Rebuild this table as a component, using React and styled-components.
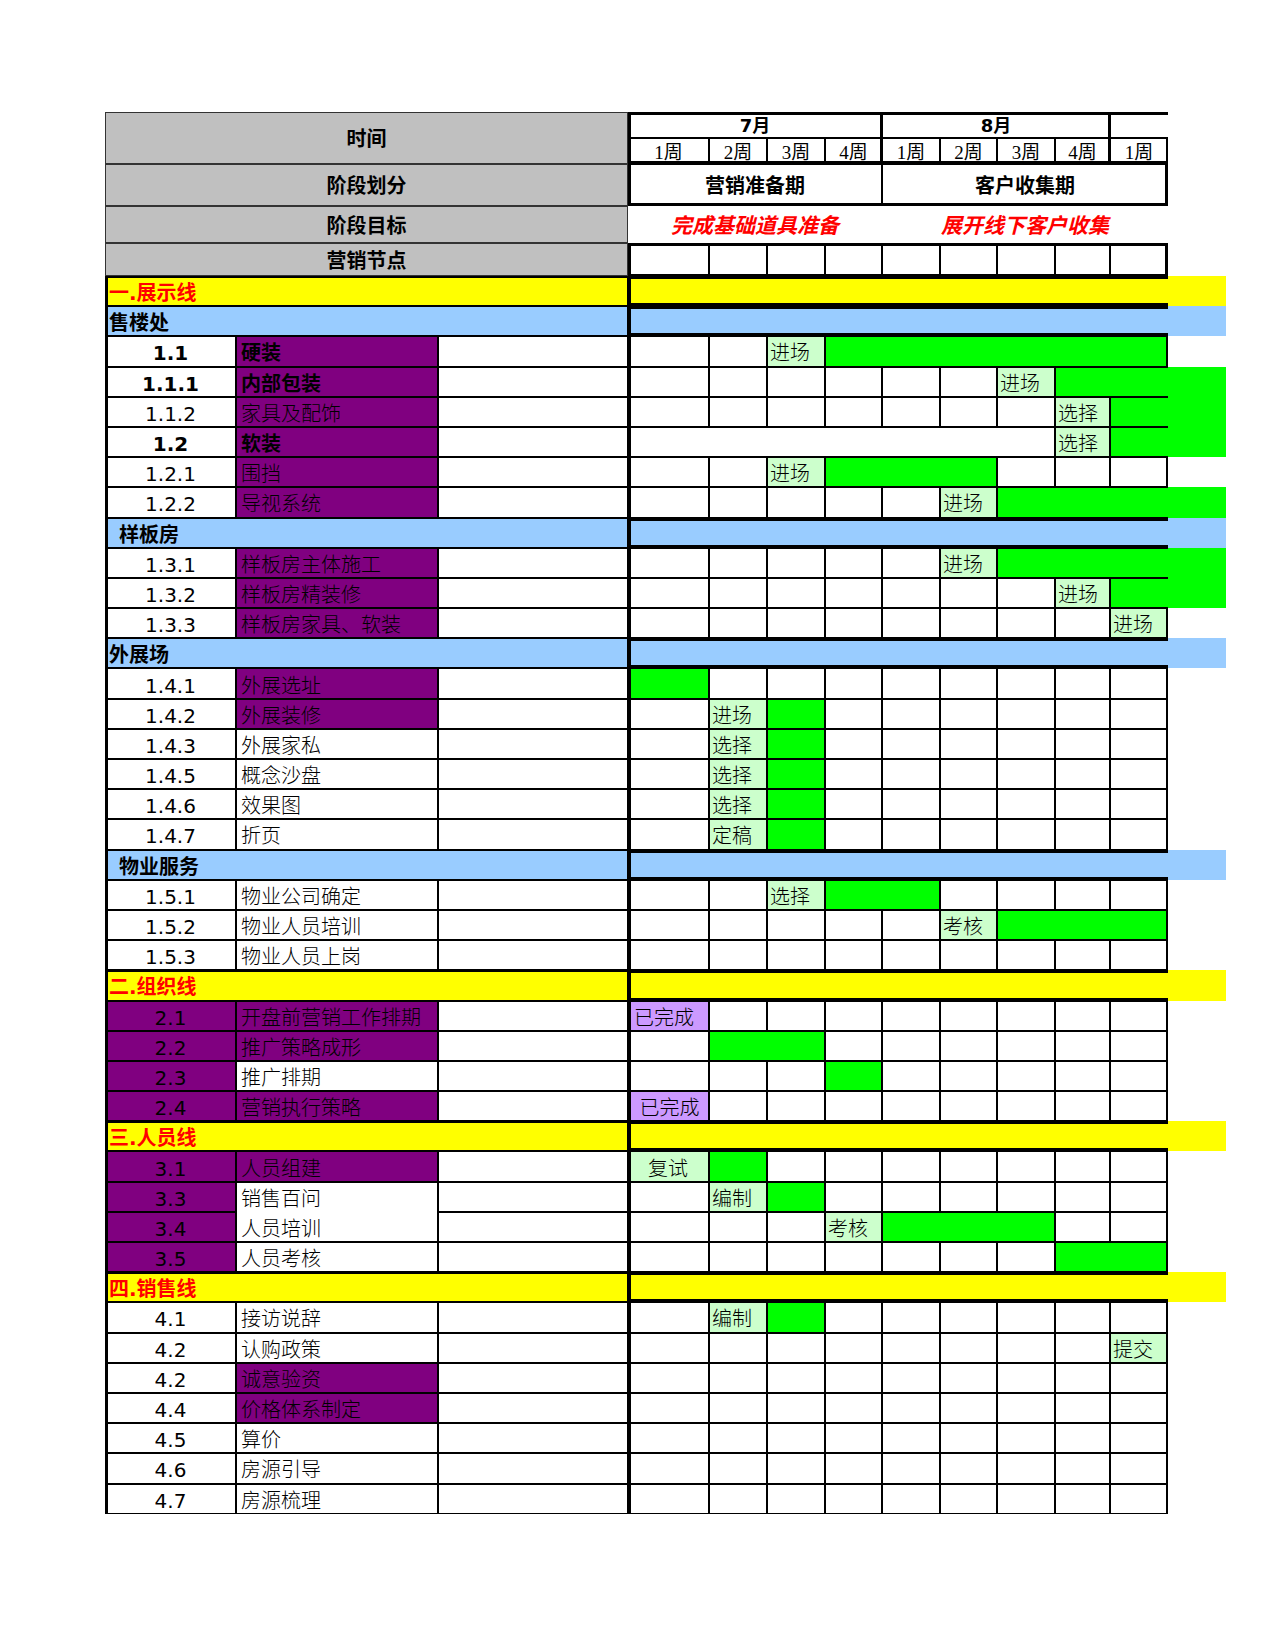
import React from 'react';
import styled, { createGlobalStyle } from 'styled-components';

const GlobalStyle = createGlobalStyle`
  body {
    margin: 0;
    background: #fff;
  }
`;

const COLS = '131px 202px 190px 81px 58px 58px 57px 58px 57px 58px 55px 58px 58px';
const SANS = `"DejaVu Sans", "Noto Sans CJK SC", sans-serif`;
const SERIF = `"Liberation Serif", "Noto Sans CJK SC", serif`;
const PURPLE = '#800080';

// draws the cell lines as inset shadows so neighbouring cells add up like sheet gridlines
const frame = ({ $l = 1, $t = 1, $r = 1, $b = 1, $c = '#000' }) => {
    const s = [];
    if ($l) s.push(`inset ${$l}px 0 0 ${$c}`);
    if ($r) s.push(`inset -${$r}px 0 0 ${$c}`);
    if ($t) s.push(`inset 0 ${$t}px 0 ${$c}`);
    if ($b) s.push(`inset 0 -${$b}px 0 ${$c}`);
    return s.length ? s.join(', ') : 'none';
};

const Sheet = styled.div`
    padding: 112px 0 120px 105px;
    font-family: ${SANS};
    color: #000;
`;

const HeadGrid = styled.div`
    display: grid;
    grid-template-columns: ${COLS};
    grid-template-rows: 26px 26px 42px 37px 33px;
`;

const Row = styled.div`
    display: grid;
    grid-template-columns: ${COLS};
    height: 30.2px;
`;

const Cell = styled.div`
    grid-column: span ${p => p.$span || 1};
    grid-row: span ${p => p.$rows || 1};
    display: flex;
    align-items: center;
    justify-content: ${p => p.$align || 'flex-start'};
    padding: 0 4px;
    background: ${p => p.$bg || '#fff'};
    box-shadow: ${frame};
    font-size: 20px;
    line-height: 1;
    white-space: nowrap;
    overflow: hidden;
    min-width: 0;
`;

const BodyCell = styled(Cell)`
    padding-top: 4px;
`;

const GrayHead = styled(Cell)`
    background: #c0c0c0;
    justify-content: center;
    font-weight: bold;
    padding-top: 2px;
`;

const MonthCell = styled(Cell)`
    justify-content: center;
    font-weight: bold;
    font-size: 18px;
    padding-top: 2px;
`;

const WeekLabel = styled(Cell)`
    justify-content: center;
    font-family: ${SERIF};
    font-size: 19px;
    padding: 3px 0 0;
`;

const PhaseCell = styled(Cell)`
    justify-content: center;
    font-weight: bold;
    padding-top: 2px;
`;

const GoalCell = styled(Cell)`
    justify-content: center;
    color: #ff0000;
    font-weight: bold;
    font-style: italic;
    font-size: 21px;
    padding-top: 4px;
`;

const NoCell = styled(BodyCell)`
    justify-content: center;
    font-weight: ${p => (p.$strong ? 700 : 400)};
`;

const NameCell = styled(BodyCell)`
    font-weight: ${p => (p.$strong ? 700 : 300)};
    padding-left: 5px;
`;

const NoteCell = styled(BodyCell)``;

const WeekCell = styled(BodyCell)``;

const TagCell = styled(BodyCell)`
    background: #ccffcc;
    font-weight: 300;
    padding-left: 3px;
`;

const DoneCell = styled(BodyCell)`
    background: #cc99ff;
    font-weight: 300;
    padding-left: 6px;
`;

const BarCell = styled(BodyCell)`
    background: #00ff00;
`;

const ExtCell = styled.div`
    background: ${p => p.$bg || 'transparent'};
`;

const BandCell = styled(BodyCell)`
    font-weight: bold;
    color: ${p => p.$ink || '#000'};
    padding-left: ${p => (p.$indent ? 14 : 4)}px;
`;

const rows = [
    { band: 'line', text: '一.展示线' },
    { band: 'group', text: '售楼处' },
    { no: '1.1', name: '硬装', strong: true, nameBg: PURPLE, chart: [[2, 2, 'tag', '进场'], [3, 8, 'bar']] },
    { no: '1.1.1', name: '内部包装', strong: true, nameBg: PURPLE, ext: true, chart: [[6, 6, 'tag', '进场'], [7, 8, 'bar']] },
    { no: '1.1.2', name: '家具及配饰', nameBg: PURPLE, ext: true, chart: [[7, 7, 'tag', '选择'], [8, 8, 'bar']] },
    { no: '1.2', name: '软装', strong: true, nameBg: PURPLE, ext: true, chart: [[0, 6, 'blank'], [7, 7, 'tag', '选择'], [8, 8, 'bar']] },
    { no: '1.2.1', name: '围挡', nameBg: PURPLE, chart: [[2, 2, 'tag', '进场'], [3, 5, 'bar']] },
    { no: '1.2.2', name: '导视系统', nameBg: PURPLE, ext: true, chart: [[5, 5, 'tag', '进场'], [6, 8, 'bar']] },
    { band: 'group', text: '样板房', indent: true },
    { no: '1.3.1', name: '样板房主体施工', nameBg: PURPLE, ext: true, chart: [[5, 5, 'tag', '进场'], [6, 8, 'bar']] },
    { no: '1.3.2', name: '样板房精装修', nameBg: PURPLE, ext: true, chart: [[7, 7, 'tag', '进场'], [8, 8, 'bar']] },
    { no: '1.3.3', name: '样板房家具、软装', nameBg: PURPLE, chart: [[8, 8, 'tag', '进场']] },
    { band: 'group', text: '外展场' },
    { no: '1.4.1', name: '外展选址', nameBg: PURPLE, chart: [[0, 0, 'bar']] },
    { no: '1.4.2', name: '外展装修', nameBg: PURPLE, chart: [[1, 1, 'tag', '进场'], [2, 2, 'bar']] },
    { no: '1.4.3', name: '外展家私', chart: [[1, 1, 'tag', '选择'], [2, 2, 'bar']] },
    { no: '1.4.5', name: '概念沙盘', chart: [[1, 1, 'tag', '选择'], [2, 2, 'bar']] },
    { no: '1.4.6', name: '效果图', chart: [[1, 1, 'tag', '选择'], [2, 2, 'bar']] },
    { no: '1.4.7', name: '折页', chart: [[1, 1, 'tag', '定稿'], [2, 2, 'bar']] },
    { band: 'group', text: '物业服务', indent: true },
    { no: '1.5.1', name: '物业公司确定', chart: [[2, 2, 'tag', '选择'], [3, 4, 'bar']] },
    { no: '1.5.2', name: '物业人员培训', chart: [[5, 5, 'tag', '考核'], [6, 8, 'bar']] },
    { no: '1.5.3', name: '物业人员上岗' },
    { band: 'line', text: '二.组织线' },
    { no: '2.1', noBg: PURPLE, name: '开盘前营销工作排期', nameBg: PURPLE, chart: [[0, 0, 'done', '已完成']] },
    { no: '2.2', noBg: PURPLE, name: '推广策略成形', nameBg: PURPLE, chart: [[1, 2, 'bar']] },
    { no: '2.3', noBg: PURPLE, name: '推广排期', chart: [[3, 3, 'bar']] },
    { no: '2.4', noBg: PURPLE, name: '营销执行策略', nameBg: PURPLE, chart: [[0, 0, 'done', '已完成', true]] },
    { band: 'line', text: '三.人员线' },
    { no: '3.1', noBg: PURPLE, name: '人员组建', nameBg: PURPLE, chart: [[0, 0, 'tag', '复试', true], [1, 1, 'bar']] },
    { no: '3.3', noBg: PURPLE, name: '销售百问', openBottom: true, chart: [[1, 1, 'tag', '编制'], [2, 2, 'bar']] },
    { no: '3.4', noBg: PURPLE, name: '人员培训', openTop: true, chart: [[3, 3, 'tag', '考核'], [4, 6, 'bar']] },
    { no: '3.5', noBg: PURPLE, name: '人员考核', chart: [[7, 8, 'bar']] },
    { band: 'line', text: '四.销售线' },
    { no: '4.1', name: '接访说辞', chart: [[1, 1, 'tag', '编制'], [2, 2, 'bar']] },
    { no: '4.2', name: '认购政策', chart: [[8, 8, 'tag', '提交']] },
    { no: '4.2', name: '诚意验资', nameBg: PURPLE },
    { no: '4.4', name: '价格体系制定', nameBg: PURPLE },
    { no: '4.5', name: '算价' },
    { no: '4.6', name: '房源引导' },
    { no: '4.7', name: '房源梳理' },
];

const segKinds = { tag: TagCell, done: DoneCell, bar: BarCell, blank: WeekCell };

function Chart({ segs = [], ext }) {
    const out = [];
    let c = 0;
    while (c < 9) {
        const seg = segs.find(s => s[0] === c);
        const left = c === 0 ? 3 : 1;
        if (seg) {
            const [from, to, kind, text, center] = seg;
            const Comp = segKinds[kind];
            const right = to === 8 ? (ext ? 0 : 2) : 1;
            out.push(
                <Comp key={c} $span={to - from + 1} $l={left} $r={right} $align={center ? 'center' : undefined}>
                    {text}
                </Comp>
            );
            c = to + 1;
        } else {
            out.push(<WeekCell key={c} $l={left} $r={c === 8 ? 2 : 1} />);
            c += 1;
        }
    }
    out.push(<ExtCell key="ext" $bg={ext ? '#00ff00' : undefined} />);
    return out;
}

function Band({ row }) {
    const yellow = row.band === 'line';
    const bg = yellow ? '#ffff00' : '#99ccff';
    return (
        <Row>
            <BandCell $span={3} $bg={bg} $ink={yellow ? '#ff0000' : '#000'} $l={3} $t={yellow ? 2 : 1} $indent={row.indent}>
                {row.text}
            </BandCell>
            <BandCell $span={9} $bg={bg} $l={3} $t={3} $b={3} $r={0} />
            <ExtCell $bg={bg} />
        </Row>
    );
}

function Task({ row }) {
    return (
        <Row>
            <NoCell $bg={row.noBg} $strong={row.strong} $l={3}>{row.no}</NoCell>
            <NameCell $bg={row.nameBg} $strong={row.strong} $b={row.openBottom ? 0 : 1} $t={row.openTop ? 0 : 1}>
                {row.name}
            </NameCell>
            <NoteCell />
            <Chart segs={row.chart} ext={row.ext} />
        </Row>
    );
}

const weeks = ['1周', '2周', '3周', '4周', '1周', '2周', '3周', '4周', '1周'];
const gray = { $c: '#333' };

function Header() {
    return (
        <HeadGrid>
            <GrayHead $span={3} $rows={2} {...gray}>时间</GrayHead>
            <MonthCell $span={4} $t={3} $l={3} $r={2}>7月</MonthCell>
            <MonthCell $span={4} $t={3} $r={2}>8月</MonthCell>
            <MonthCell $t={3} $r={0} />
            <ExtCell />
            {weeks.map((w, i) => (
                <WeekLabel key={i} $l={i === 0 ? 3 : 1} $b={3} $r={i === 3 || i >= 7 ? 2 : 1}>{w}</WeekLabel>
            ))}
            <ExtCell />
            <GrayHead $span={3} {...gray}>阶段划分</GrayHead>
            <PhaseCell $span={4} $l={3} $b={3}>营销准备期</PhaseCell>
            <PhaseCell $span={5} $b={3} $r={3}>客户收集期</PhaseCell>
            <ExtCell />
            <GrayHead $span={3} {...gray}>阶段目标</GrayHead>
            <GoalCell $span={4} $l={0} $t={0} $r={0} $b={0}>完成基础道具准备</GoalCell>
            <GoalCell $span={5} $l={0} $t={0} $r={0} $b={0}>展开线下客户收集</GoalCell>
            <ExtCell />
            <GrayHead $span={3} {...gray}>营销节点</GrayHead>
            {weeks.map((w, i) => (
                <WeekCell key={i} $l={i === 0 ? 3 : 1} $t={3} $b={2} $r={i === 8 ? 3 : 1} />
            ))}
            <ExtCell />
        </HeadGrid>
    );
}

export default function App() {
    return (
        <>
            <GlobalStyle />
            <Sheet>
                <Header />
                {rows.map((row, i) =>
                    row.band ? <Band key={i} row={row} /> : <Task key={i} row={row} />
                )}
            </Sheet>
        </>
    );
}
